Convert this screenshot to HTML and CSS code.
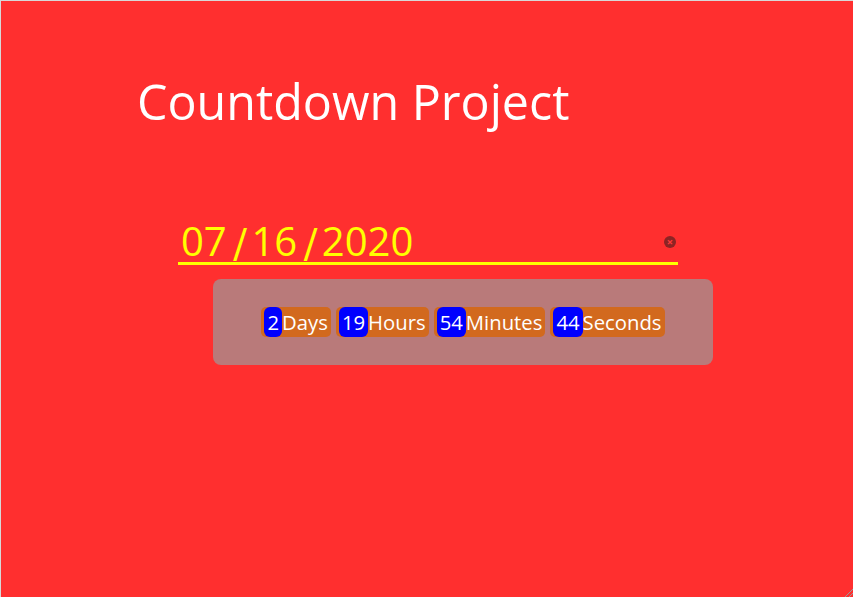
FILE: index.html
```html
<!DOCTYPE html>
<html>
<head>
<meta charset="utf-8">
<title>Countdown Project</title>
<link rel="stylesheet" href="styles.css">
</head>
<body>
<div class="page">
  <h1 class="title">Countdown Project</h1>
  <div class="date-field">
    <span class="date-value"><span>07</span><span class="sep">/</span><span>16</span><span class="sep">/</span><span>2020</span></span>
    <span class="clear">&#215;</span>
  </div>
  <div class="panel">
    <span class="badge"><span class="num">2</span>Days</span>
    <span class="badge"><span class="num">19</span>Hours</span>
    <span class="badge"><span class="num">54</span>Minutes</span>
    <span class="badge"><span class="num">44</span>Seconds</span>
  </div>
  <span class="grip"></span>
</div>
</body>
</html>
```

FILE: styles.css
```css
html, body {
  margin: 0;
  padding: 0;
  height: 100%;
}
body {
  font-family: "Open Sans", "Noto Sans", sans-serif;
  background: #ff2f2f;
}
.page {
  position: relative;
  box-sizing: border-box;
  height: 597px;
  background: #ff2f2f;
  border-top: 1px solid #d8d8d8;
  border-left: 1px solid #d8d8d8;
  display: flex;
  flex-direction: column;
  align-items: center;
}
.title {
  align-self: flex-start;
  margin: 70px 0 0 136px;
  font-weight: 400;
  font-size: 48.4px;
  line-height: 60px;
  color: #fff;
}
.date-field {
  margin: 86px 0 0 2px;
  width: 500px;
  height: 48px;
  box-sizing: border-box;
  border-bottom: 3px solid #ffff00;
  display: flex;
  align-items: flex-end;
  justify-content: space-between;
  padding: 0 2px 0 3px;
}
.date-value {
  display: flex;
  color: #ffff00;
  font-size: 40px;
  line-height: 42px;
}
.sep {
  display: inline-block;
  margin: 0 4px 0 6px;
  transform: scaleY(1.15) translateY(2px);
}
.clear {
  width: 12px;
  height: 12px;
  border-radius: 50%;
  background: #8c2424;
  color: #ff3a3a;
  font-size: 11px;
  line-height: 12px;
  text-align: center;
  font-weight: 700;
  margin-bottom: 14px;
}
.panel {
  margin: 14px 0 0 72px;
  width: 500px;
  height: 86px;
  box-sizing: border-box;
  background: #b97a7a;
  border-radius: 8px;
  display: flex;
  align-items: center;
  justify-content: center;
  gap: 5px;
}
.badge {
  display: flex;
  align-items: stretch;
  height: 30px;
  background: #d2691e;
  border-radius: 5px;
  padding: 0 3px;
  color: #fff;
  font-size: 20.3px;
  line-height: 30px;
}
.num {
  background: #0000ff;
  border-radius: 6px;
  padding: 0 3px;
}
.grip {
  position: absolute;
  right: 0;
  bottom: 0;
  width: 8px;
  height: 8px;
  background: linear-gradient(135deg, transparent 0 45%, #999 45% 52%, transparent 52% 70%, #999 70% 77%, transparent 77%);
}
```
